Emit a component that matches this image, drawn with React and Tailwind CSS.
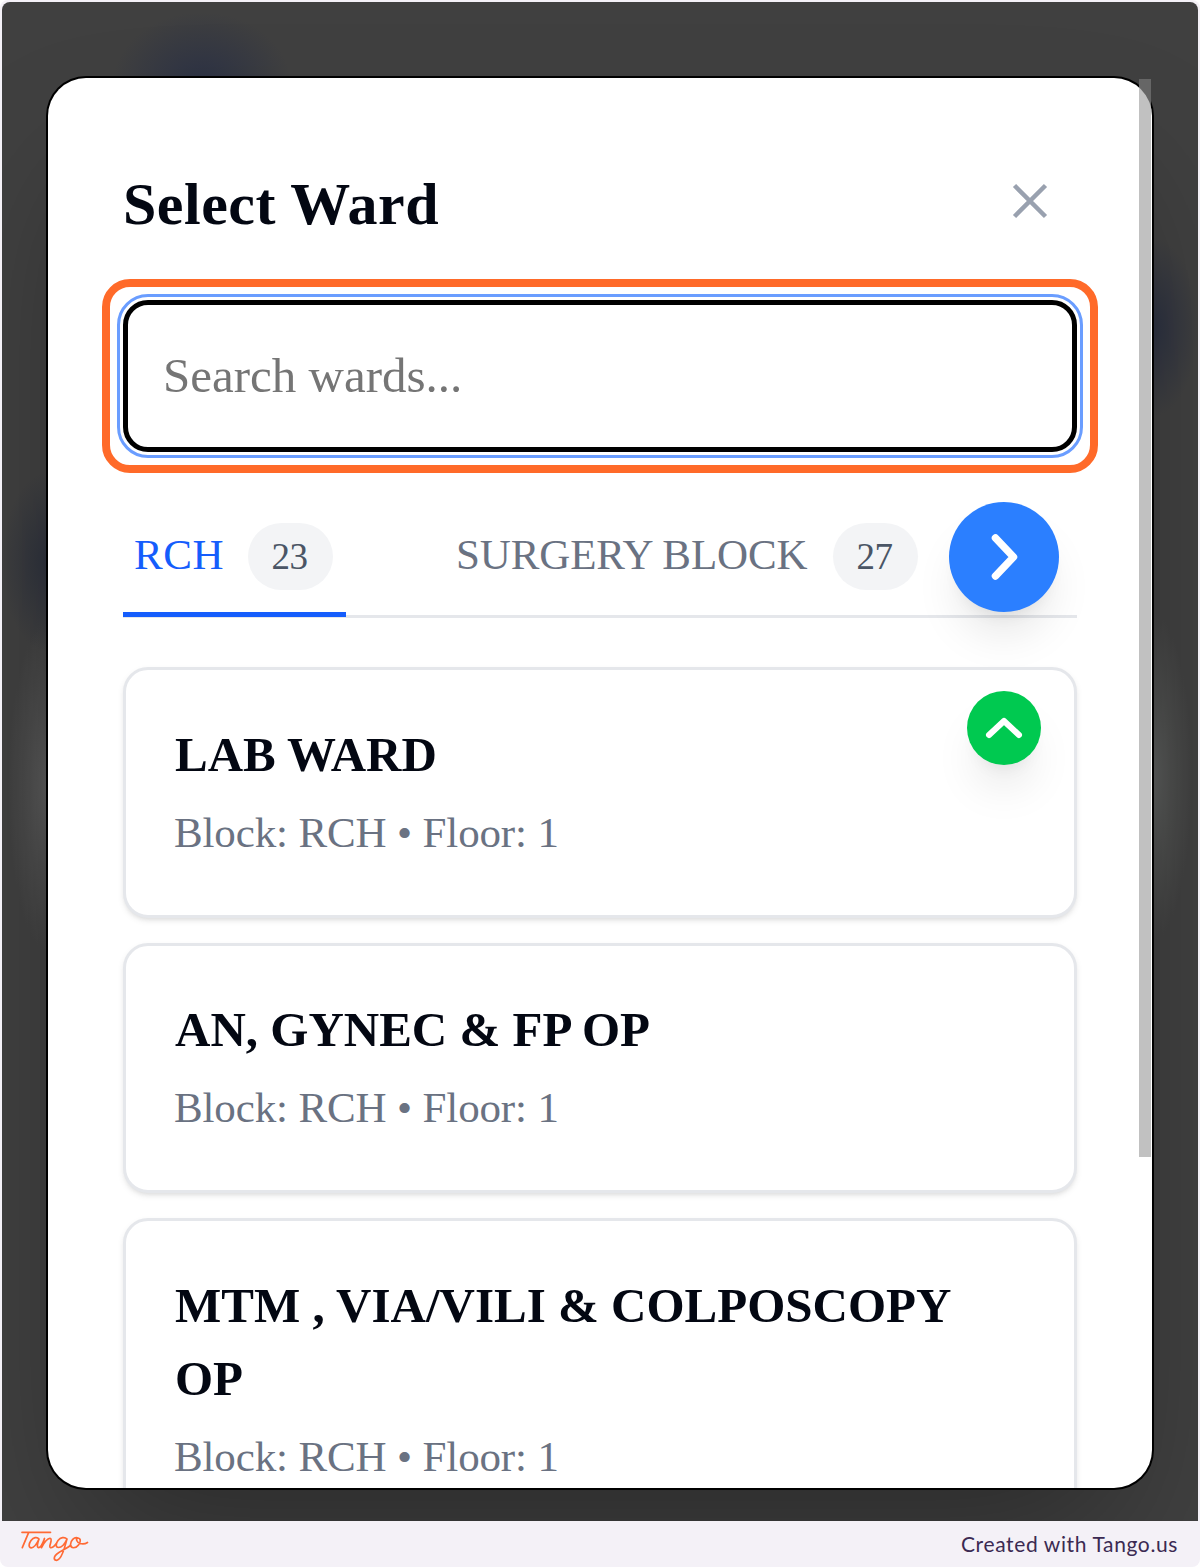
const wards = [
  { lines: ["LAB WARD"], block: "RCH", floor: 1, up: true },
  { lines: ["AN, GYNEC & FP OP"], block: "RCH", floor: 1 },
  { lines: ["MTM , VIA/VILI & COLPOSCOPY", "OP"], block: "RCH", floor: 1 },
];

function WardCard({ ward }) {
  return (
    <div className="relative w-[954px] shrink-0 rounded-[25px] border-[3px] border-[#e5e7eb] bg-white pt-[47.5px] pb-[52.5px] pl-[49px] shadow-[0_3px_6px_rgba(0,0,0,0.08),0_3px_4px_-2px_rgba(0,0,0,0.08)]">
      {ward.lines.map((l) => (
        <div key={l} className="h-[73.5px] text-[49px] leading-[73.5px] font-bold whitespace-nowrap text-[#030712]">
          {l}
        </div>
      ))}
      <div className="mt-[10.5px] -mb-[0.5px] -ml-px h-[61px] text-[43px] leading-[61px] tracking-[-0.14px] whitespace-nowrap text-[#6a7282]">
        Block: {ward.block} • Floor: {ward.floor}
      </div>
      {ward.up && (
        <button className="absolute top-[21px] right-[33px] flex size-[74px] items-center justify-center rounded-full bg-[#00c950] shadow-[0_30px_45px_-9px_rgba(0,0,0,0.1),0_12px_18px_-12px_rgba(0,0,0,0.1)]">
          <svg width="40" height="26" viewBox="0 0 40 26" fill="none" stroke="white" strokeWidth="6" strokeLinecap="round" strokeLinejoin="round">
            <path d="M5 20 20 6 35 20" />
          </svg>
        </button>
      )}
    </div>
  );
}

function Badge({ children }) {
  return (
    <span className="flex h-[67px] w-[85px] items-center justify-center rounded-full bg-[#f3f4f6] pr-[2px] text-[37px] tracking-[-0.5px] text-[#4a5565]">
      {children}
    </span>
  );
}

export default function App() {
  return (
    <div className="flex h-[1567px] w-[1200px] flex-col overflow-hidden rounded-[8px] bg-[#f4f1f7] font-['Liberation_Serif',serif]">
      <div className="mx-[2px] mt-[2px] h-[1519px] shrink-0 overflow-hidden rounded-t-[8px] bg-[#404040] bg-[radial-gradient(ellipse_90px_75px_at_200px_85px,#2b3145,transparent),radial-gradient(ellipse_46px_90px_at_1150px_325px,#2b3040,transparent),radial-gradient(ellipse_46px_90px_at_46px_560px,#2d313c,transparent),radial-gradient(ellipse_40px_165px_at_46px_785px,#5a5a5a,#4c4c4c_50%,transparent),radial-gradient(ellipse_40px_165px_at_1150px_775px,#5a5c5b,#4c4d4c_50%,transparent)] pt-[76px] pl-[46px]">
        <div className="relative flex h-[1410px] w-[1104px] flex-col rounded-[38px] bg-white shadow-[0_0_0_2px_#000,0_75px_150px_-36px_rgba(0,0,0,0.35)]">
          <div className="absolute top-px right-px h-[1078px] w-[12px] overflow-hidden bg-[#666]">
            <div className="absolute -top-px -right-px h-[1200px] w-[76px] rounded-[38px] bg-[#c1c1c1]" />
          </div>
          <div className="flex h-[1410px] flex-col overflow-hidden pl-[75px]">
            <div className="mt-[80px] flex h-[92px] w-[954px] shrink-0 items-center justify-between">
              <h1 className="text-[60px] leading-[91px] font-bold tracking-[0.5px] text-[#030712]">Select Ward</h1>
              <svg className="mr-[29px] mb-[6px]" width="36" height="36" viewBox="0 0 36 36" fill="none" stroke="#99a1af" strokeWidth="4.5">
                <path d="M2.5 2.5 33.5 33.5M33.5 2.5 2.5 33.5" />
              </svg>
            </div>
            <div className="mt-[29px] -ml-[21px] w-[996px] shrink-0 rounded-[28px] border-[8px] border-[#ff6a29] p-[7px]">
              <div className="rounded-[31px] border-[3px] border-[#6a9dff] p-[3px]">
                <div className="flex h-[152px] items-center rounded-[25px] border-[5px] border-black pl-[35px]">
                  <span className="text-[49px] leading-[60px] text-[#757575]">Search wards...</span>
                </div>
              </div>
            </div>
            <div className="flex h-[145px] w-[954px] shrink-0 border-b-[3px] border-[#e5e7eb] pt-[29px]">
              <div className="flex h-[115px] w-[223px] items-start border-b-[5px] border-[#155dfc] pt-[21px] pl-[11px]">
                <span className="w-[114px] text-[43px] leading-[63px] tracking-[0.6px] text-[#155dfc]">RCH</span>
                <Badge>23</Badge>
              </div>
              <div className="ml-[110px] flex h-[115px] items-start pt-[21px]">
                <span className="w-[377px] text-[43px] leading-[63px] tracking-[-0.14px] whitespace-nowrap text-[#6a7282]">SURGERY BLOCK</span>
                <Badge>27</Badge>
              </div>
              <button className="ml-[31px] flex size-[110px] items-center justify-center rounded-full bg-[#2b7fff] shadow-[0_30px_45px_-9px_rgba(0,0,0,0.1),0_12px_18px_-12px_rgba(0,0,0,0.1)]">
                <svg width="32" height="50" viewBox="0 0 32 50" fill="none" stroke="white" strokeWidth="7.5" strokeLinecap="round" strokeLinejoin="round">
                  <path d="M7.500 6 25.500 25 7.500 44" />
                </svg>
              </button>
            </div>
            <div className="mt-[49px] flex flex-col gap-[25px]">
              {wards.map((w) => (
                <WardCard key={w.lines[0]} ward={w} />
              ))}
            </div>
          </div>
        </div>
      </div>
      <footer className="flex h-[46px] items-center justify-between pr-[22px] pl-[20px]">
        <svg className="overflow-visible" width="70" height="34" viewBox="0 0 70 34" fill="none" stroke="#ff6a35" strokeWidth="1.7" strokeLinecap="round" strokeLinejoin="round" role="img" aria-label="Tango">
          <path d="M2 5.3H30.5M8.5 5.8 2.3 20.7" />
          <path d="M19 12C17 9.500 13.500 10.500 11 13.500C8.500 17 8.500 20.500 11 20.800C14 21 17 16.500 19 12C17.500 16 16.500 20.500 18.500 20.700C20.500 20.800 22.500 17 24.500 11.500L21.500 20.700C24 15.500 28 10.500 30.500 11.500C33 12.800 28 20 30.500 20.700C32.500 21 34.500 19 36 17" />
          <path d="M47 12C44.500 9.500 40.500 10.500 38 13.500C35.500 17 35.500 20.500 38.500 20.500C42 20.500 45 16.500 47 12C45 19 43 28 39.500 31.500C37 34.500 33.500 33.500 34.500 30C36 25.500 44 23.500 50.500 18.500" />
          <path d="M58 11C54 9.500 50.500 14 50.500 17.500C50.500 22 56 21.500 58.500 18C61.500 14 60.500 11 57.500 11C55.500 12 57 15.500 60 16.500C63 17.300 65.500 16.800 67.500 15.500" />
        </svg>
        <span className="font-[Lato,sans-serif] text-[21px] tracking-[0.62px] text-[#3b2a52]">Created with Tango.us</span>
      </footer>
    </div>
  );
}
